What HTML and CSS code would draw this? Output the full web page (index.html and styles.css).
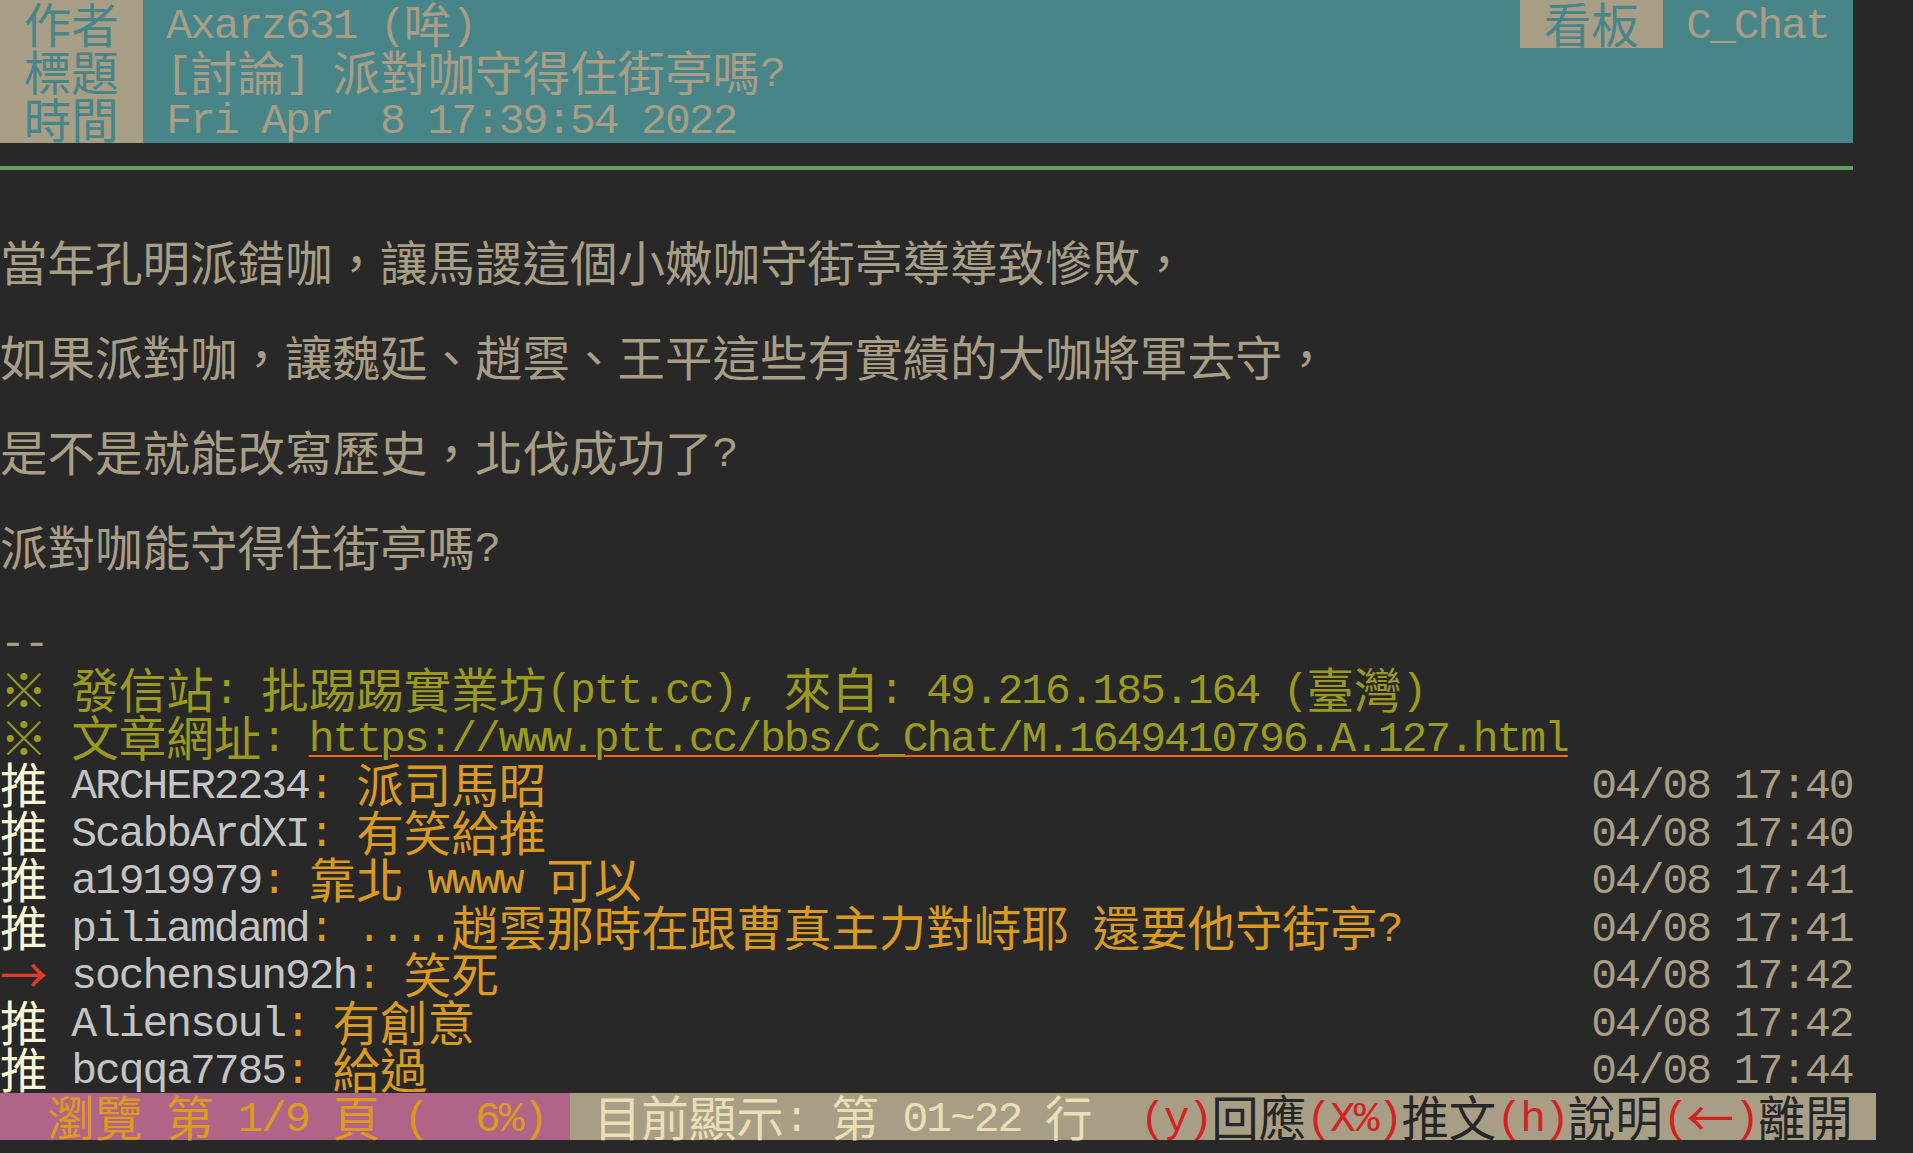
FILE: index.html
```html
<!DOCTYPE html>
<html lang="zh-Hant">
<head>
<meta charset="utf-8">
<title>[討論] 派對咖守得住街亭嗎? - 看板 C_Chat - 批踢踢實業坊</title>
<link rel="stylesheet" href="styles.css">
</head>
<body>
<main class="term">
<div class="hrow"><div class="hlabel"><span class="w">作者</span></div><div class="hval grow">Axarz631 (<span class="w">哞</span>)</div><div class="hlabel"><span class="w">看板</span></div><div class="hval board">C_Chat</div></div>
<div class="hrow"><div class="hlabel"><span class="w">標題</span></div><div class="hval grow">[<span class="w">討論</span>] <span class="w">派對咖守得住街亭嗎</span>?</div></div>
<div class="hrow"><div class="hlabel"><span class="w">時間</span></div><div class="hval grow">Fri Apr  8 17:39:54 2022</div></div>
<div class="sep"><div class="sepline"></div></div>
<div class="line"></div>
<div class="line"><span class="w">當年孔明派錯咖，讓馬謖這個小嫩咖守街亭導導致慘敗，</span></div>
<div class="line"></div>
<div class="line"><span class="w">如果派對咖，讓魏延、趙雲、王平這些有實績的大咖將軍去守，</span></div>
<div class="line"></div>
<div class="line"><span class="w">是不是就能改寫歷史，北伐成功了</span>?</div>
<div class="line"></div>
<div class="line"><span class="w">派對咖能守得住街亭嗎</span>?</div>
<div class="line"></div>
<div class="line">--</div>
<div class="line olive"><span class="w">※</span> <span class="w">發信站</span>: <span class="w">批踢踢實業坊</span>(ptt.cc), <span class="w">來自</span>: 49.216.185.164 (<span class="w">臺灣</span>)</div>
<div class="line olive"><span class="w">※</span> <span class="w">文章網址</span>: <a class="url" href="https://www.ptt.cc/bbs/C_Chat/M.1649410796.A.127.html">https://www.ptt.cc/bbs/C_Chat/M.1649410796.A.127.html</a></div>
<div class="line push"><div class="msg"><span class="w tag">推</span> <span class="user">ARCHER2234</span><span class="say">: <span class="w">派司馬昭</span></span></div><div class="ts">04/08 17:40</div></div>
<div class="line push"><div class="msg"><span class="w tag">推</span> <span class="user">ScabbArdXI</span><span class="say">: <span class="w">有笑給推</span></span></div><div class="ts">04/08 17:40</div></div>
<div class="line push"><div class="msg"><span class="w tag">推</span> <span class="user">a1919979</span><span class="say">: <span class="w">靠北</span> wwww <span class="w">可以</span></span></div><div class="ts">04/08 17:41</div></div>
<div class="line push"><div class="msg"><span class="w tag">推</span> <span class="user">piliamdamd</span><span class="say">: ....<span class="w">趙雲那時在跟曹真主力對峙耶</span> <span class="w">還要他守街亭</span>?</span></div><div class="ts">04/08 17:41</div></div>
<div class="line push"><div class="msg"><span class="w sym arrow">→</span> <span class="user">sochensun92h</span><span class="say">: <span class="w">笑死</span></span></div><div class="ts">04/08 17:42</div></div>
<div class="line push"><div class="msg"><span class="w tag">推</span> <span class="user">Aliensoul</span><span class="say">: <span class="w">有創意</span></span></div><div class="ts">04/08 17:42</div></div>
<div class="line push"><div class="msg"><span class="w tag">推</span> <span class="user">bcqqa7785</span><span class="say">: <span class="w">給過</span></span></div><div class="ts">04/08 17:44</div></div>
<div class="status"><div class="st-l">  <span class="w">瀏覽</span> <span class="w">第</span> 1/9 <span class="w">頁</span> (  6%) </div><div class="st-r"> <span class="w">目前顯示</span>: <span class="w">第</span> 01~22 <span class="w">行</span>  <span class="key">(y)</span><span class="act"><span class="w">回應</span></span><span class="key">(X%)</span><span class="act"><span class="w">推文</span></span><span class="key">(h)</span><span class="act"><span class="w">說明</span></span><span class="key">(<span class="w sym">←</span>)</span><span class="act"><span class="w">離開</span></span> </div></div>
</main>
</body>
</html>
```
FILE: styles.css
```css
:root {
  --c: 23.75px;
  --r: 47.5px;
  --bg: #282828;
  --teal: #488589;
  --tan: #a89e86;
  --olive: #9c9a1e;
  --yellow: #d99a1f;
  --gray: #c4c4c4;
  --cream: #fdf6d6;
  --red: #e23a2c;
  --pink: #b06488;
  --green: #6a9a63;
}

html, body {
  margin: 0;
  padding: 0;
  background: var(--bg);
}

body {
  width: 1913px;
  height: 1153px;
  overflow: hidden;
}

.term {
  display: grid;
  grid-auto-rows: var(--r);
  font-family: "Liberation Mono", "DejaVu Sans Mono", monospace;
  font-size: 43px;
  letter-spacing: -2.05px;
  color: var(--tan);
}

.w {
  font-family: "Noto Sans CJK TC", "Noto Sans CJK JP", sans-serif;
  font-size: 47.5px;
  letter-spacing: 0;
  line-height: 0;
  vertical-align: -5px;
}

.sym {
  display: inline-block;
  width: calc(var(--c) * 2);
  text-align: center;
}

.line,
.hlabel,
.hval,
.st-l,
.st-r {
  box-sizing: border-box;
  height: var(--r);
  padding-top: 3px;
  line-height: var(--r);
  white-space: pre;
}

/* header */
.hrow {
  display: flex;
  width: calc(var(--c) * 78);
  height: var(--r);
}

.hlabel {
  width: calc(var(--c) * 6);
  padding-left: var(--c);
  background: var(--tan);
  color: var(--teal);
  flex: none;
}

.hval {
  background: var(--teal);
  color: var(--tan);
  padding-left: var(--c);
}

.grow {
  flex: 1;
}

.board {
  width: calc(var(--c) * 8);
  flex: none;
}

.sep {
  height: var(--r);
}

.sepline {
  width: calc(var(--c) * 78);
  height: 4px;
  margin-top: 23.5px;
  background: var(--green);
}

/* signature lines */
.olive {
  color: var(--olive);
}

.url {
  color: var(--olive);
  text-decoration: underline;
  text-decoration-color: #ff6410;
  text-decoration-thickness: 2px;
  text-underline-offset: 4px;
}

/* pushes */
.push {
  display: flex;
  justify-content: space-between;
  width: calc(var(--c) * 78);
}

.tag {
  color: var(--cream);
}

.arrow {
  color: var(--red);
}

.user {
  color: var(--gray);
}

.say {
  color: var(--yellow);
}

.ts {
  color: var(--tan);
}

/* status bar */
.status {
  display: flex;
  height: var(--r);
}

.st-l {
  width: calc(var(--c) * 24);
  background: var(--pink);
  color: #dc9a1e;
}

.st-r {
  width: calc(var(--c) * 55);
  background: #a89e86;
  color: #ebdfb6;
}

.key {
  color: #d42222;
}

.act {
  color: #262626;
}
```
